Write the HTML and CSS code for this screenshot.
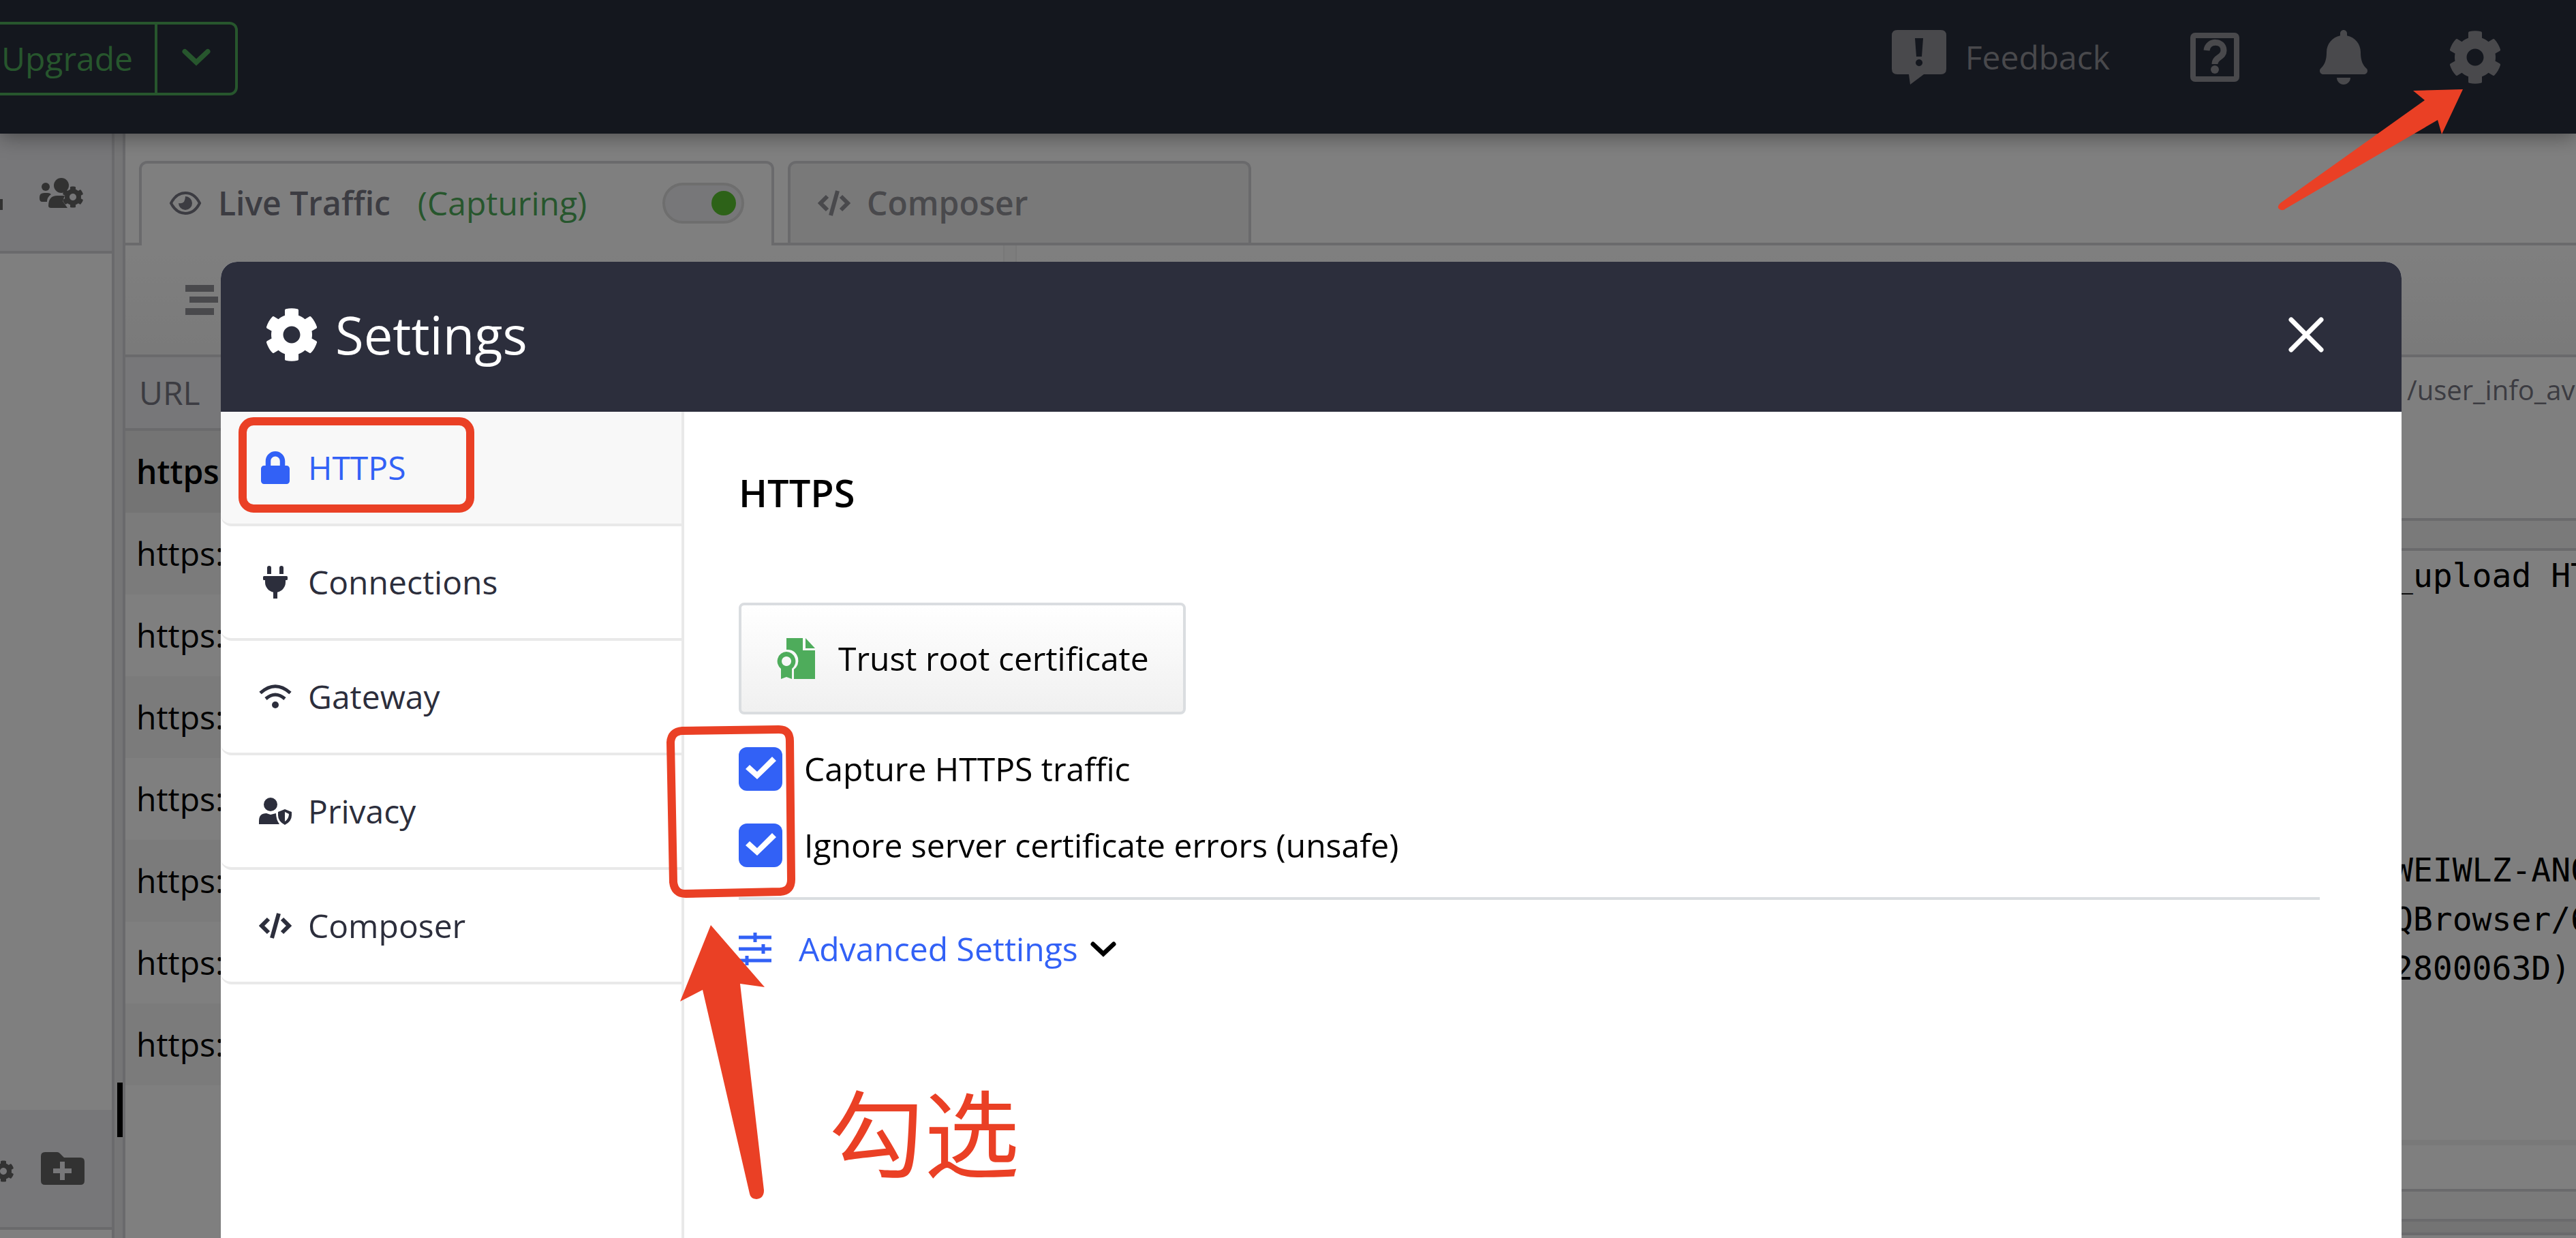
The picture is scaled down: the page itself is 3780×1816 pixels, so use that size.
FILE: index.html
```html
<!DOCTYPE html>
<html lang="en">
<head>
<meta charset="utf-8">
<title>Settings</title>
<link rel="stylesheet" href="styles.css">
</head>
<body>
<svg class="defs" aria-hidden="true">
  <symbol id="gear" viewBox="0 0 512 512"><path d="M487.4 315.7l-42.6-24.6c4.3-23.2 4.3-47 0-70.2l42.6-24.6c4.9-2.8 7.1-8.6 5.5-14-11.1-35.6-30-67.8-54.7-94.6-3.8-4.1-10-5.1-14.8-2.3L380.8 110c-17.9-15.4-38.5-27.3-60.8-35.1V25.8c0-5.6-3.9-10.5-9.4-11.7-36.7-8.2-74.3-7.8-109.2 0-5.5 1.2-9.4 6.1-9.4 11.7V75c-22.2 7.9-42.8 19.8-60.8 35.1L88.7 85.5c-4.9-2.8-11-1.9-14.8 2.3-24.7 26.7-43.6 58.9-54.7 94.6-1.7 5.4.6 11.2 5.5 14L67.3 221c-4.3 23.2-4.3 47 0 70.2l-42.6 24.6c-4.9 2.8-7.1 8.6-5.5 14 11.1 35.6 30 67.8 54.7 94.6 3.8 4.1 10 5.1 14.8 2.3l42.6-24.6c17.9 15.4 38.5 27.3 60.8 35.1v49.2c0 5.6 3.9 10.5 9.4 11.7 36.7 8.2 74.3 7.8 109.2 0 5.5-1.2 9.4-6.1 9.4-11.7v-49.2c22.2-7.9 42.8-19.8 60.8-35.1l42.6 24.6c4.9 2.8 11 1.9 14.8-2.3 24.7-26.7 43.6-58.9 54.7-94.6 1.5-5.5-.7-11.3-5.6-14.1zM256 336c-44.1 0-80-35.9-80-80s35.9-80 80-80 80 35.9 80 80-35.9 80-80 80z"/></symbol>
  <symbol id="code" viewBox="0 0 48 40"><path d="M14 10 4 20l10 10M34 10l10 10-10 10" fill="none" stroke="currentColor" stroke-width="6"/><path d="M29 2 19 38" fill="none" stroke="currentColor" stroke-width="6"/></symbol>
  <symbol id="chevron" viewBox="0 0 40 24"><path d="M4 4l16 15L36 4" fill="none" stroke="currentColor" stroke-width="7" stroke-linecap="round" stroke-linejoin="miter"/></symbol>
</svg>

<div class="app">
  <header class="topbar">
    <div class="upgrade">
      <button class="upgrade-main">Upgrade</button>
      <button class="upgrade-more" aria-label="Upgrade options"><svg width="42" height="26"><use href="#chevron"/></svg></button>
    </div>
    <nav class="top-actions">
      <button class="action"><svg width="80" height="80" viewBox="0 0 80 80"><path fill-rule="evenodd" d="M8 0h64q8 0 8 8v49q0 8-8 8H47L27 80l-2-15H8q-8 0-8-8V8q0-8 8-8zm26 12 2 27h8l2-27zM40 43a5 5 0 1 0 .1 0z"/></svg>Feedback</button>
      <button class="action" aria-label="Help"><svg width="72" height="72" viewBox="0 0 72 72"><rect x="4" y="4" width="64" height="64" rx="3" fill="none" stroke="currentColor" stroke-width="8"/><path d="M24 26C26 10 49 11 49 26c0 11-13 9-13 20" fill="none" stroke="currentColor" stroke-width="9"/><circle cx="36" cy="54" r="6"/></svg></button>
      <button class="action" aria-label="Notifications"><svg width="70" height="80" viewBox="0 0 448 512"><path d="M224 512c35.32 0 63.97-28.65 63.97-64H160.03c0 35.35 28.65 64 63.97 64zm215.39-149.71c-19.32-20.76-55.47-51.99-55.47-154.29 0-77.7-54.48-139.9-127.94-155.16V32c0-17.67-14.32-32-31.98-32s-31.98 14.33-31.98 32v20.84C118.56 68.1 64.08 130.3 64.08 208c0 102.3-36.15 133.53-55.47 154.29-6 6.45-8.66 14.16-8.61 21.71.11 16.4 12.98 32 32.1 32h383.8c19.12 0 32-15.6 32.1-32 .05-7.55-2.61-15.27-8.61-21.71z"/></svg></button>
      <button class="action" aria-label="Settings"><svg width="80" height="80"><use href="#gear"/></svg></button>
    </nav>
  </header>

  <div class="main">
    <aside class="side">
      <div class="side-bar side-top">
        <i class="clip-mark"></i>
        <button class="tool" aria-label="Team settings"><svg width="66" height="46" viewBox="0 0 66 46"><circle cx="32" cy="11" r="11"/><circle cx="9" cy="13" r="6"/><path d="M0 30v-2q0-6 7-6h5q3 0 5 2-6 4-6 11H4q-4 0-4-5zM13 41q0-15 13-15h11l-3 8 7 10H17q-4 0-4-3z"/><svg x="33" y="12" width="32" height="32"><use href="#gear"/></svg></svg></button>
      </div>
      <div class="side-body"></div>
      <div class="side-bar side-bottom">
        <button class="tool half" aria-label="Folder settings"><svg width="32" height="32"><use href="#gear"/></svg></button>
        <button class="tool" aria-label="New folder"><svg width="64" height="48" viewBox="0 0 64 48"><path fill-rule="evenodd" d="M6 0h18q2 0 4 2l6 6h24q6 0 6 6v28q0 6-6 6H6q-6 0-6-6V6q0-6 6-6zm22 14v10H18v7h10v10h7V31h10v-7H35V14z"/></svg></button>
      </div>
    </aside>
    <div class="splitter"><i class="handle"></i></div>

    <section class="work">
      <div class="tabs">
        <div class="tab active">
          <svg width="48" height="34" viewBox="0 0 48 34"><path d="M3 17C13-3 35-3 45 17 35 37 13 37 3 17z" fill="none" stroke="currentColor" stroke-width="4"/><path d="M24 7a10 10 0 1 1-10 10q5 1 8-2 2-4 2-8z"/></svg>
          <span>Live Traffic</span><span class="state">(Capturing)</span>
          <input type="checkbox" class="toggle" checked aria-label="Capture">
        </div>
        <div class="tab"><svg width="48" height="40"><use href="#code"/></svg><span>Composer</span></div>
      </div>
      <div class="panels">
        <section class="traffic">
          <div class="toolbar"><button class="tool" aria-label="Stream"><svg width="48" height="44" viewBox="0 0 48 44"><path d="M0 0h42v10H0zM6 17h42v9H6zM0 34h42v10H0z"/></svg></button></div>
          <table class="requests">
            <thead><tr><th>URL</th></tr></thead>
            <tbody>
              <tr class="selected"><td>https:</td></tr>
              <tr><td>https:</td></tr>
              <tr><td>https:</td></tr>
              <tr><td>https:</td></tr>
              <tr><td>https:</td></tr>
              <tr><td>https:</td></tr>
              <tr><td>https:</td></tr>
              <tr><td>https:</td></tr>
            </tbody>
          </table>
        </section>
        <div class="divider"></div>
        <section class="inspector">
          <div class="toolbar"></div>
          <div class="path">/user_info_av</div>
          <div class="strip"></div>
          <pre class="raw">_upload HT





WEIWLZ-AN0
QBrowser/6
2800063D)</pre>
          <div class="find"></div>
          <div class="strip"></div>
          <div class="foot"></div>
        </section>
      </div>
    </section>
  </div>
</div>

<div class="overlay">
  <div class="dialog" role="dialog" aria-labelledby="dialog-title">
    <div class="dialog-head">
      <svg width="80" height="80"><use href="#gear"/></svg>
      <h1 id="dialog-title">Settings</h1>
      <button class="close" aria-label="Close"><svg width="52" height="52" viewBox="0 0 52 52"><path d="M4 4l44 44M48 4 4 48" stroke="currentColor" stroke-width="7" stroke-linecap="round"/></svg></button>
    </div>
    <div class="dialog-body">
      <nav class="menu">
        <button class="item current"><svg width="48" height="48" viewBox="-32 0 512 512"><path d="M400 224h-24v-72C376 68.200 307.800 0 224 0S72 68.200 72 152v72H48c-26.500 0-48 21.500-48 48v192c0 26.500 21.500 48 48 48h352c26.500 0 48-21.500 48-48V272c0-26.500-21.500-48-48-48zm-104 0H152v-72c0-39.700 32.300-72 72-72s72 32.300 72 72v72z"/></svg>HTTPS</button>
        <button class="item"><svg width="48" height="48" viewBox="-64 0 512 512"><path d="M320 32a32 32 0 0 0-64 0v96h64zm48 128H16a16 16 0 0 0-16 16v32a16 16 0 0 0 16 16h16v32a160 160 0 0 0 128 156.800V512h64v-99.200A160 160 0 0 0 352 256v-32h16a16 16 0 0 0 16-16v-32a16 16 0 0 0-16-16zM128 32a32 32 0 0 0-64 0v96h64z"/></svg>Connections</button>
        <button class="item"><svg width="48" height="36" viewBox="0 0 48 36"><path d="M2 12.500Q24-7 46 12.500M10 21q14-12 28 0" fill="none" stroke="currentColor" stroke-width="5"/><circle cx="24" cy="30" r="5"/></svg>Gateway</button>
        <button class="item"><svg width="48" height="40" viewBox="0 0 48 40"><circle cx="17" cy="10" r="10"/><path d="M0 39v-5q0-11 11-11l6 2 8-2q0 9 5 16z"/><path fill-rule="evenodd" d="M38 17l10 4v5q0 9-10 14-10-5-10-14v-5zm0 4v14q6-4 6-11z"/></svg>Privacy</button>
        <button class="item"><svg width="48" height="40"><use href="#code"/></svg>Composer</button>
      </nav>
      <div class="pane">
        <h2>HTTPS</h2>
        <button class="trust"><svg width="56" height="60" viewBox="0 0 56 60"><path d="M14 0h24v18h18v42H25V46q8-6 6-17-4-13-17-12z"/><path d="M42 0l14 15H42z"/><path fill-rule="evenodd" d="M14 20a14 14 0 0 1 8 25v15l-8-3-8 3V45a14 14 0 0 1 8-25zm0 7a7 7 0 1 0 .1 0z"/></svg>Trust root certificate</button>
        <label class="check"><input type="checkbox" checked>Capture HTTPS traffic</label>
        <label class="check"><input type="checkbox" checked>Ignore server certificate errors (unsafe)</label>
        <hr>
        <a class="advanced" href="#"><svg width="48" height="48" viewBox="0 0 48 48"><path d="M0 7h48M0 24h48M0 41h48M24 0v14M36 17v14M12 34v14" fill="none" stroke="currentColor" stroke-width="5"/></svg>Advanced Settings<svg class="caret" width="38" height="23"><use href="#chevron"/></svg></a>
      </div>
    </div>
  </div>
</div>

<div class="marks">
  <div class="mark-item"></div>
  <svg class="mark-checks" width="200" height="260" viewBox="0 0 200 260"><path d="M26 12 168 10Q184 10 184 27L186 230Q186 247 170 248L31 251Q15 251 13 234L9 29Q10 13 26 12z" fill="none" stroke="currentColor" stroke-width="12"/></svg>
  <svg class="mark-up" width="126" height="406" viewBox="0 0 126 406"><path d="M46 1 125 92 89 87 124 390Q124 402 113 403 104 402 103 395L34 96 1 113z"/></svg>
  <svg class="mark-gear" width="274" height="180" viewBox="0 0 274 180"><path d="M273 1 200 3 217 17 5 168Q-1 174 4 177 9 180 13 176L236 46 242 67z"/></svg>
  <p class="mark-text" lang="zh">勾选</p>
</div>
</body>
</html>
```
FILE: styles.css
```css
* { box-sizing: border-box; }
body {
  margin: 0;
  font: 48px/64px "Open Sans", "Noto Sans", sans-serif;
  color: #000;
  background: #fff;
  overflow: hidden;
}
button, input { font: inherit; color: inherit; margin: 0; }
button { background: none; border: 0; padding: 0; display: flex; align-items: center; }
svg { display: block; flex: none; fill: currentColor; }
.defs { position: absolute; width: 0; height: 0; }

.app { height: 100vh; display: flex; flex-direction: column; }
.topbar {
  height: 196px;
  flex: none;
  display: flex;
  align-items: center;
  justify-content: space-between;
  padding: 0 108px 24px 0;
  background: #282e3c;
  color: #929299;
  box-shadow: 0 4px 28px rgba(0, 0, 0, .4);
  position: relative;
  z-index: 1;
}
.upgrade {
  display: flex;
  height: 108px;
  color: #4eac5b;
  border: 4px solid #4eac5b;
  border-left: 0;
  border-radius: 0 12px 12px 0;
}
.upgrade-main { padding: 0 32px 0 2px; border-right: 4px solid #4eac5b; }
.upgrade-more { padding: 0 36px 4px; }
.top-actions { display: flex; align-items: center; height: 168px; align-self: flex-start; }
.action { gap: 28px; }
.action + .action { margin-left: 118px; }

.main { flex: 1; display: flex; min-height: 0; }
.side { width: 164px; display: flex; flex-direction: column; padding-bottom: 12px; }
.side-bar {
  height: 176px;
  display: flex;
  align-items: center;
  justify-content: space-between;
  padding-right: 40px;
  background: #eeeef2;
  color: #646464;
  border-bottom: 4px solid #d4d4d8;
}
.side-top { padding-top: 4px; }
.side-body { flex: 1; }
.clip-mark { width: 4px; height: 16px; margin-top: 32px; background: #646464; }
.half { width: 21px; justify-content: flex-end; overflow: hidden; margin-top: 8px; }
.splitter {
  width: 20px;
  display: flex;
  align-items: center;
  justify-content: flex-end;
  background: #ebebed;
  border: solid #d4d4d8;
  border-width: 0 4px;
}
.handle { width: 8px; height: 80px; margin-top: 1244px; background: #000; }

.work { flex: 1; min-width: 0; display: flex; flex-direction: column; }
.tabs {
  display: flex;
  gap: 20px;
  height: 164px;
  padding: 40px 20px 0;
  box-shadow: inset 0 -4px #d4d4d8;
}
.tab {
  width: 680px;
  margin-bottom: 4px;
  display: flex;
  align-items: center;
  gap: 24px;
  padding: 0 40px;
  font-weight: 600;
  color: #929299;
  background: #f2f2f2;
  border: 4px solid #d4d4d8;
  border-bottom: 0;
  border-radius: 12px 12px 0 0;
}
.tab.active { width: 932px; margin-bottom: 0; padding-bottom: 4px; background: #fff; color: #787884; }
.state { margin-left: 16px; color: #4eac5b; font-weight: 400; }
.toggle {
  appearance: none;
  width: 120px;
  height: 60px;
  margin-left: auto;
  padding: 8px;
  display: flex;
  justify-content: flex-end;
  background: #eeeef2;
  border: 4px solid #dcdcdc;
  border-radius: 30px;
}
.toggle::after { content: ""; width: 36px; height: 36px; border-radius: 50%; background: #5ac430; }

.panels { flex: 1; display: flex; min-height: 0; }
.traffic { flex: 0 0 1288px; }
.toolbar {
  height: 164px;
  flex: none;
  display: flex;
  align-items: center;
  padding: 0 88px;
  color: #929299;
  background: linear-gradient(#fff, #f4f4f4);
  border-bottom: 4px solid #d4d4d8;
}
.requests { width: 100%; border-collapse: separate; border-spacing: 0; text-align: left; }
.requests th { height: 108px; padding: 0 20px; font-weight: 400; color: #787884; background: #eeeef2; border-bottom: 4px solid #d4d4d8; }
.requests td { height: 120px; padding: 0 16px; }
.requests tr:nth-child(even) { background: #f7f7f7; }
.requests .selected { font-weight: 600; background: #e8e8e8; }
.divider { width: 20px; background: #fbfbfb; border: solid #f0f0f0; border-width: 0 2px; }
.inspector { flex: 1; min-width: 0; display: flex; flex-direction: column; }
.path, .raw { overflow: hidden; white-space: pre; }
.path { height: 236px; padding: 16px 0 0 calc(100% - 248px); font-size: 40px; color: #787884; }
.strip { height: 48px; background: #f4f4f4; border: solid #d4d4d8; border-width: 4px 0; }
.raw { height: 864px; margin: 0; padding-left: calc(100% - 268px); font: 48px/72px "DejaVu Sans Mono", monospace; }
.find { height: 72px; border-top: 8px solid #f2f2f2; }
.foot { height: 20px; flex: none; background: #e8e8e8; border-bottom: 4px solid #d4d4d8; }

.overlay {
  position: fixed;
  inset: 0;
  z-index: 2;
  padding: 384px 256px 0 324px;
  background: rgba(0, 0, 0, .5);
  display: flex;
}
.dialog { flex: 1; display: flex; flex-direction: column; background: #fff; border-radius: 24px 24px 0 0; overflow: hidden; }
.dialog-head { height: 220px; display: flex; align-items: center; gap: 24px; padding: 0 114px 6px 64px; background: #2c2e3c; color: #fff; }
h1 { margin: 0; font-size: 76px; line-height: 100px; font-weight: 400; }
.close { margin-left: auto; }
.dialog-body { flex: 1; display: flex; }
.menu { width: 680px; border-right: 4px solid #e9e9e9; }
.item {
  width: 100%;
  height: 168px;
  gap: 24px;
  padding: 0 56px;
  color: #2c2e3c;
  border-bottom: 4px solid #e9e9e9;
  border-radius: 0 0 0 16px;
}
.current { background: #f8f8f8; color: #3261f6; }
.pane { flex: 1; padding: 78px 120px 0 80px; }
h2 { margin: 0 0 122px; font-size: 56px; line-height: 80px; font-weight: 600; }
.trust {
  height: 164px;
  gap: 34px;
  padding: 0 50px 0 52px;
  background: linear-gradient(#fff, #f0f0f0);
  border: 4px solid #dadde0;
  border-radius: 8px;
}
.trust svg { color: #4eac5b; }
.check { display: flex; align-items: center; gap: 32px; height: 64px; margin-top: 48px; }
.check input { appearance: none; width: 64px; height: 64px; border-radius: 12px; background: #3261f6; }
.check input::after {
  content: "";
  display: block;
  height: 64px;
  background: #fff;
  clip-path: polygon(10px 32px, 16px 26px, 27px 36px, 49px 14px, 55px 20px, 27px 47px);
}
hr { margin: 44px 0 40px; border: 0; border-top: 4px solid #dadde0; }
.advanced { display: inline-flex; align-items: center; gap: 40px; color: #3261f6; text-decoration: none; }
.caret { margin-left: -22px; color: #000; }

/* Annotations drawn over the window */
.marks { position: fixed; inset: 0; z-index: 3; color: #ea4025; pointer-events: none; }
.marks > * { position: absolute; }
.mark-item { left: 350px; top: 612px; width: 346px; height: 140px; border: 12px solid; border-radius: 22px; }
.mark-checks { left: 975px; top: 1060px; }
.mark-up { left: 997px; top: 1356px; }
.mark-gear { right: 165px; top: 130px; }
.mark-text { left: 1216px; top: 1556px; margin: 0; font: 140px/200px "Noto Sans CJK SC", sans-serif; }
```
